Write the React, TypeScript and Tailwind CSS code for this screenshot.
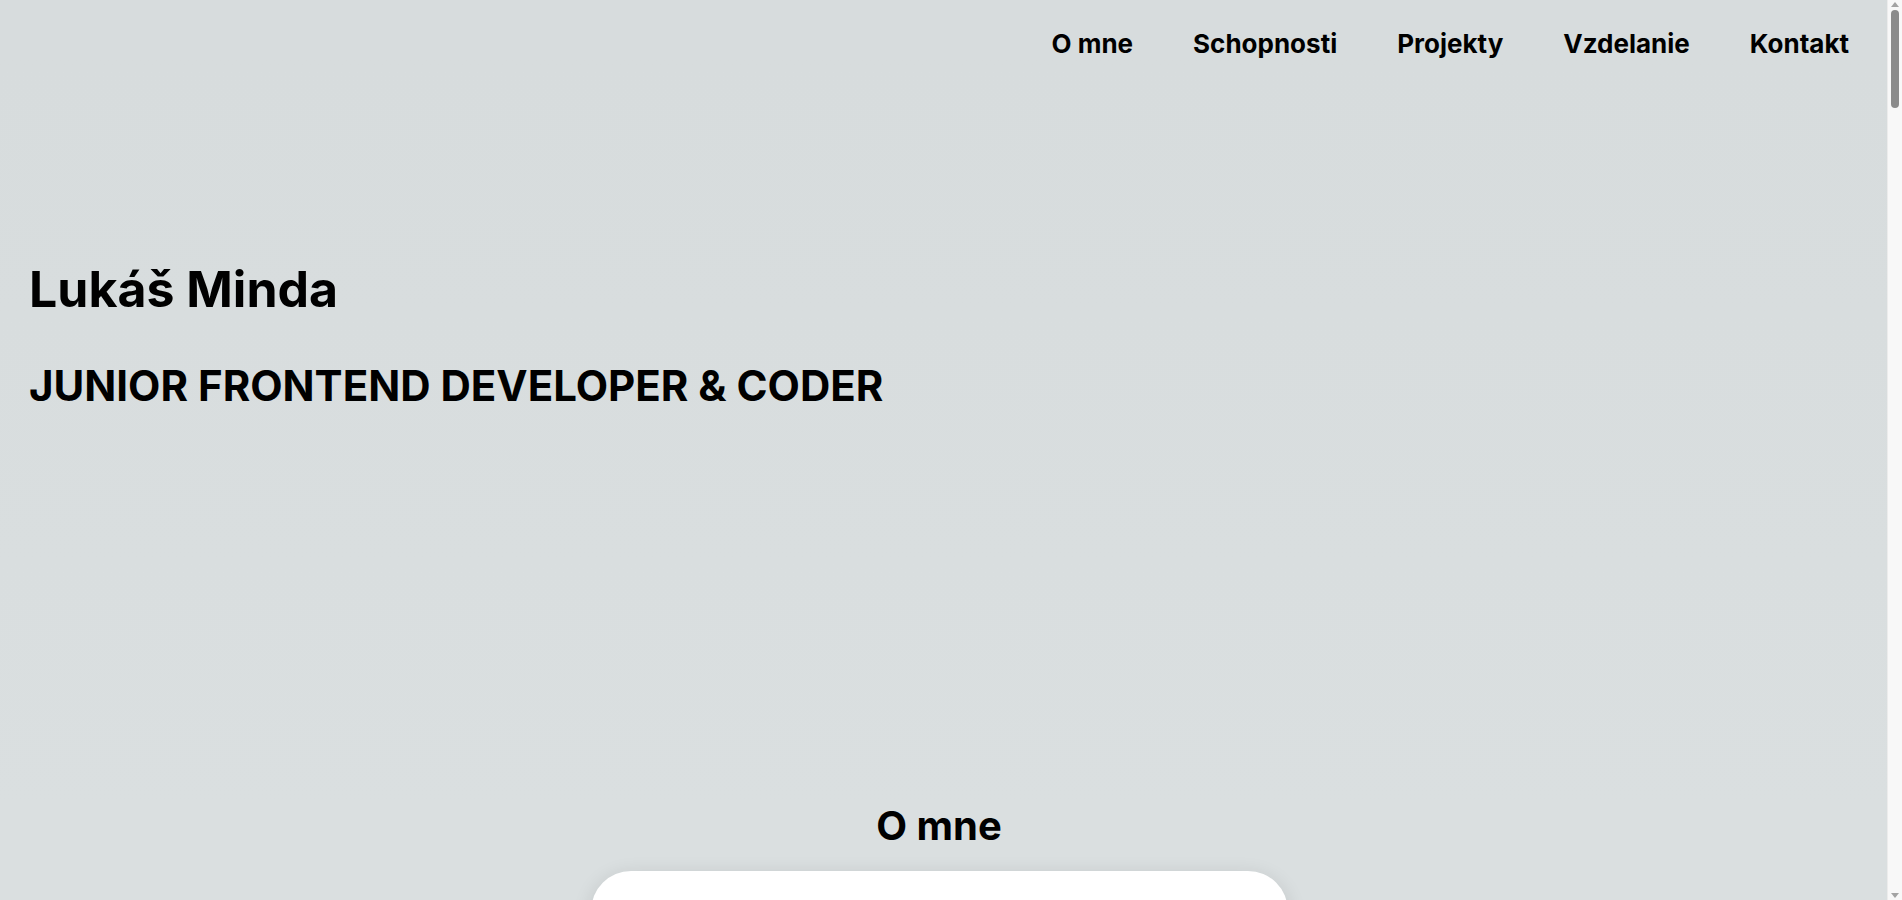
import React from 'react';

const links = ['O mne', 'Schopnosti', 'Projekty', 'Vzdelanie', 'Kontakt'];

export default function App() {
  return (
    <div className="min-h-screen pr-[15px] bg-[#d7dcdd] text-black font-['Inter',sans-serif]">
      <header className="flex justify-end pt-[28px] pr-[38px]">
        <nav className="flex gap-[60px]">
          {links.map((l) => (
            <a key={l} href="#" className="text-[26px] font-bold leading-[32px]">
              {l}
            </a>
          ))}
        </nav>
      </header>

      <section className="h-[742px] px-[29px] pt-[199px] bg-gradient-to-b from-[#d7dcdd] to-[#dadfe0]">
        <h1 className="text-[50px] font-bold leading-[60px]">Lukáš Minda</h1>
        <h2 className="mt-[41px] text-[42px] font-bold leading-[52px]">JUNIOR FRONTEND DEVELOPER &amp; CODER</h2>
      </section>

      <section className="flex flex-col items-center pr-[9px] pb-[200px] bg-[#dadfe0]">
        <h2 className="text-[40px] font-bold leading-[48px]">O mne</h2>
        <div className="mt-[21px] h-[500px] w-[697px] rounded-[40px] bg-white shadow-[0_4px_20px_rgba(0,0,0,0.12)]" />
      </section>

      {/* scrollbar strip */}
      <div className="fixed top-0 right-0 h-screen w-[15px] bg-[#f8f8f8] border-l border-[#ececec] flex flex-col items-center">
        <div className="mt-[2px] h-0 w-0 border-x-[4px] border-b-[5px] border-x-transparent border-b-[#a3a3a3]" />
        <div className="mt-[3px] h-[98px] w-[8px] rounded-full bg-[#8b8b8b]" />
        <div className="mt-auto mb-[2px] h-0 w-0 border-x-[4px] border-t-[5px] border-x-transparent border-t-[#a3a3a3]" />
      </div>
    </div>
  );
}
